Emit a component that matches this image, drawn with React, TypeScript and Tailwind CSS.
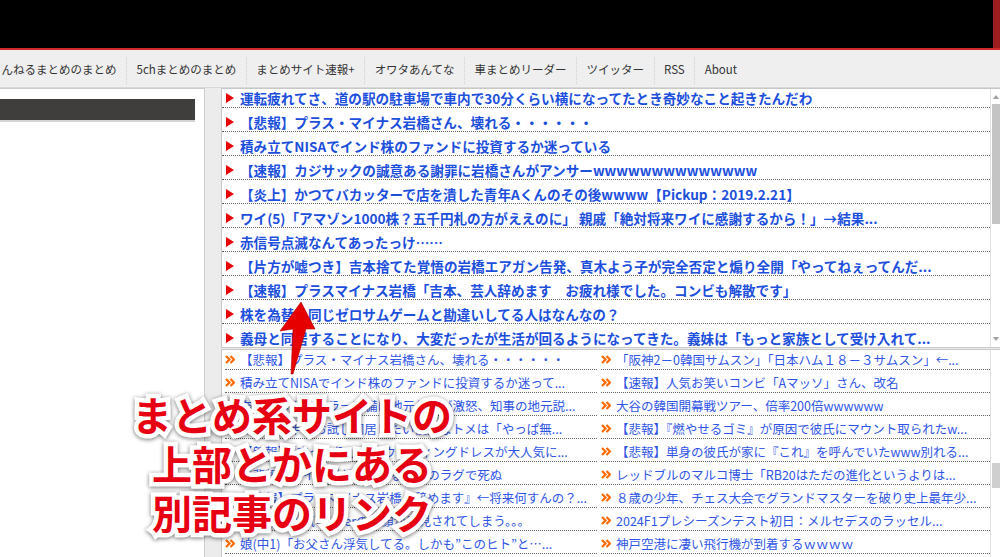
import type { ReactNode } from "react";

const navItems = [
  "んねるまとめのまとめ",
  "5chまとめのまとめ",
  "まとめサイト速報+",
  "オワタあんてな",
  "車まとめリーダー",
  "ツイッター",
  "RSS",
  "About",
];

const topItems = [
  "運転疲れてさ、道の駅の駐車場で車内で30分くらい横になってたとき奇妙なこと起きたんだわ",
  "【悲報】プラス・マイナス岩橋さん、壊れる・・・・・・",
  "積み立てNISAでインド株のファンドに投資するか迷っている",
  "【速報】カジサックの誠意ある謝罪に岩橋さんがアンサーwwwwwwwwwwwwww",
  "【炎上】かつてバカッターで店を潰した青年Aくんのその後wwww【Pickup：2019.2.21】",
  "ワイ(5)「アマゾン1000株？五千円札の方がええのに」 親戚「絶対将来ワイに感謝するから！」→結果...",
  "赤信号点滅なんてあったっけ……",
  "【片方が嘘つき】吉本捨てた覚悟の岩橋エアガン告発、真木よう子が完全否定と煽り全開「やってねぇってんだ...",
  "【速報】プラスマイナス岩橋「吉本、芸人辞めます　お疲れ様でした。コンビも解散です」",
  "株を為替と同じゼロサムゲームと勘違いしてる人はなんなの？",
  "義母と同居することになり、大変だったが生活が回るようになってきた。義妹は「もっと家族として受け入れて...",
];

const leftItems = [
  "【悲報】プラス・マイナス岩橋さん、壊れる・・・・・・",
  "積み立てNISAでインド株のファンドに投資するか迷って...",
  "奈良のメガソーラー整備に地元住民が激怒、知事の地元説...",
  "イッチ、半年お試し同居したい性質なトメは「やっぱ無...",
  "【朗報】「すっきりした」ウエディングドレスが大人気に...",
  "【悲報】ワイ、弾が撃たれるまでのラグで死ぬ",
  "【悲報】プラスマイナス岩橋『辞めます』←将来何すんの？...",
  "【悲報】人気VTuberの素顔が発見されてしまう。。。",
  "娘(中1)「お父さん浮気してる。しかも”このヒト”と…...",
];

const rightItems = [
  "「阪神2－0韓国サムスン」「日本ハム１８－３サムスン」←...",
  "【速報】人気お笑いコンビ「Aマッソ」さん、改名",
  "大谷の韓国開幕戦ツアー、倍率200倍wwwwww",
  "【悲報】『燃やせるゴミ』が原因で彼氏にマウント取られたw...",
  "【悲報】単身の彼氏が家に『これ』を呼んでいたwww別れる...",
  "レッドブルのマルコ博士「RB20はただの進化というよりは...",
  "８歳の少年、チェス大会でグランドマスターを破り史上最年少...",
  "2024F1プレシーズンテスト初日：メルセデスのラッセル...",
  "神戸空港に凄い飛行機が到着するｗｗｗｗ",
];

const noteLines = ["まとめ系サイトの", "上部とかにある", "別記事のリンク"];

function Chevrons() {
  return (
    <svg width="10" height="9" viewBox="0 0 10 9" className="shrink-0">
      <polyline points="1,1 4.5,4.5 1,8" fill="none" stroke="#ff6a00" strokeWidth="2.2" />
      <polyline points="5.5,1 9,4.5 5.5,8" fill="none" stroke="#ff6a00" strokeWidth="2.2" />
    </svg>
  );
}

function TopRow({ children }: { children: ReactNode }) {
  return (
    <div className="h-[24px] pt-[4px] flex items-center gap-[6px] pl-[4px] border-b border-dotted border-[#666] whitespace-nowrap overflow-hidden">
      <span className="w-0 h-0 shrink-0 border-y-[5px] border-y-transparent border-l-[8px] border-l-[#e60000]" />
      <span className="text-[13.6px] font-bold text-[#1c4fdc] leading-[16px]">{children}</span>
    </div>
  );
}

function SmallRow({ children }: { children: ReactNode }) {
  return (
    <div className="h-[23px] pt-[2px] flex items-center gap-[5px] border-b border-dotted border-[#666] whitespace-nowrap overflow-hidden">
      <Chevrons />
      <span className="text-[12.5px] text-[#2f55e6] leading-[15px]">{children}</span>
    </div>
  );
}

export default function App() {
  return (
    <div className="relative w-[1000px] h-[557px] overflow-hidden bg-[#ececec] font-['Noto_Sans_CJK_JP',sans-serif]">
      {/* header */}
      <div className="h-[48px] bg-black flex">
        <div className="ml-auto w-[7px] bg-[#9c1d1d]" />
      </div>
      <div className="h-[2px] bg-[#d0292b]" />

      {/* nav */}
      <div className="h-[38px] bg-[#efefef] border-b border-[#d8d8d8] flex items-center overflow-hidden">
        <div className="flex items-center -ml-[8px] pt-[3px]">
          {navItems.map((item, i) => (
            <div
              key={item}
              className={`h-[27px] px-[9.5px] flex items-center text-[11.5px] text-[#333] whitespace-nowrap ${
                i < navItems.length - 1 ? "border-r border-dotted border-[#cfcfcf]" : ""
              }`}
            >
              {item}
            </div>
          ))}
        </div>
      </div>

      {/* main */}
      <div className="flex h-[470px]">
        <div className="w-[205px] shrink-0 bg-white border-r border-t border-[#cdcdcd] pt-[10px] pr-[9px]">
          <div className="h-[23px] bg-[#3f3e3c] border-b-2 border-[#d4d4d4]" />
        </div>

        <div className="ml-[16px] flex-1 flex flex-col">
          {/* top list */}
          <div className="h-[260px] bg-white border border-r-0 border-[#c8c8c8] flex">
            <div className="flex-1 overflow-hidden">
              <div className="-mt-[5px]">
                {topItems.map((t) => (
                  <TopRow key={t}>{t}</TopRow>
                ))}
              </div>
            </div>
            <div className="w-[10px] shrink-0 border-l border-[#e2e2e2] bg-white flex flex-col items-center">
              <div className="mt-[6px] w-0 h-0 border-x-[3px] border-x-transparent border-b-[4px] border-b-[#a0a0a0]" />
              <div className="mt-[5px] w-[8px] h-[120px] bg-[#c4c4c4]" />
              <div className="mt-auto mb-[6px] w-0 h-0 border-x-[3px] border-x-transparent border-t-[4px] border-t-[#a0a0a0]" />
            </div>
          </div>

          {/* bottom list */}
          <div className="mt-[1px] flex-1 bg-white border-l border-t border-[#c8c8c8] flex overflow-hidden">
            <div className="w-[377px] shrink-0 pl-[1px] pr-[2px] overflow-hidden">
              <div className="-mt-[3px] pl-[2px]">
                {leftItems.map((t) => (
                  <SmallRow key={t}>{t}</SmallRow>
                ))}
              </div>
            </div>
            <div className="flex-1 pl-[1px] overflow-hidden">
              <div className="-mt-[3px] pl-[1px]">
                {rightItems.map((t) => (
                  <SmallRow key={t}>{t}</SmallRow>
                ))}
              </div>
            </div>
            <div className="w-[10px] shrink-0 border-l border-[#e2e2e2] bg-white">
              <div className="mt-[113px] mx-auto w-[8px] h-[25px] bg-[#cfcfcf]" />
            </div>
          </div>
        </div>
      </div>

      {/* annotation arrow */}
      <svg className="absolute left-0 top-0 pointer-events-none" width="1000" height="557">
        <polygon
          points="301,302 315,329 306,329 293,374 291,374 293,329 280,331"
          fill="#e60000"
          stroke="#b00000"
          strokeWidth="0.6"
        />
      </svg>

      {/* annotation text: white outline layer under red layer */}
      <div className="absolute left-[92px] top-[390px] w-[400px] text-center text-[40px] leading-[49px] font-bold">
        <div className="text-white [-webkit-text-stroke:9px_#fff] drop-shadow-[0_1px_2px_rgba(0,0,0,0.55)]">
          {noteLines.map((l) => (
            <div key={l}>{l}</div>
          ))}
        </div>
        <div className="absolute inset-0 text-[#e60012]" aria-hidden="true">
          {noteLines.map((l) => (
            <div key={l}>{l}</div>
          ))}
        </div>
      </div>
    </div>
  );
}
